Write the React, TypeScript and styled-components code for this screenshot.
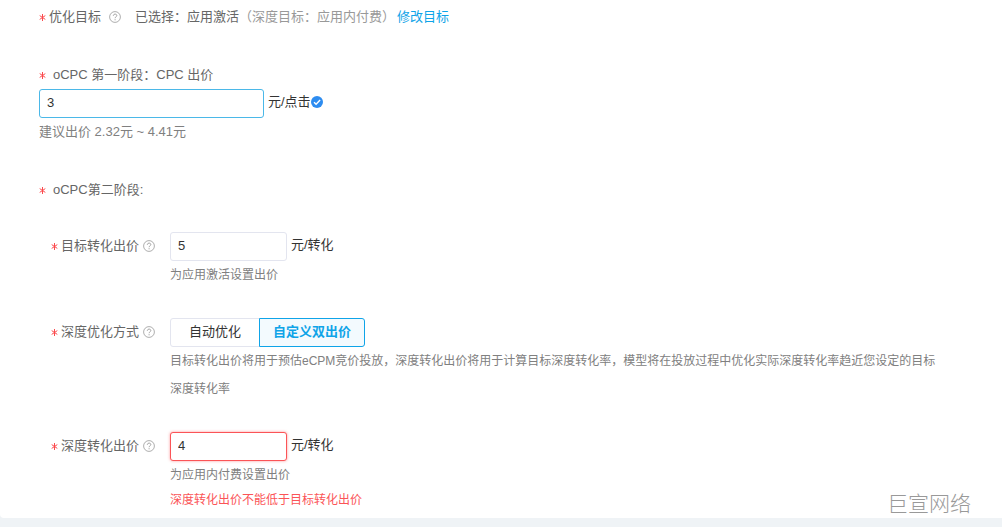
import React, { useState } from "react";
import styled, { createGlobalStyle } from "styled-components";

const GlobalStyle = createGlobalStyle`
  * { box-sizing: border-box; }
  body {
    margin: 0;
    background: #eff3f6;
    color: #666;
    font-family: "Liberation Sans", "Noto Sans CJK SC", sans-serif;
    font-size: 13px;
    line-height: 28px;
  }
  input, button { font: inherit; }
`;

const Panel = styled.main`
  position: relative;
  padding: 3px 60px 7px 39px;
  background: #fff;
  border-radius: 0 0 0 4px;
`;

const GoalRow = styled.div`
  display: flex;
  align-items: center;
  white-space: nowrap;
`;

const Chosen = styled.span`
  margin-left: 14px;
`;

const Muted = styled.span`
  color: #999;
`;

const GoalLink = styled.a`
  margin-left: 2px;
  color: #0fa4e8;
  text-decoration: none;
`;

const Stage = styled.section`
  margin-top: 30px;
`;

const StageTitle = styled.label`
  display: flex;
  align-items: center;
  gap: 4px;
`;

const Fields = styled.div`
  display: grid;
  row-gap: 29px;
  margin-top: 28px;
  padding-left: 12px;
`;

const Field = styled.div`
  display: grid;
  grid-template-columns: 119px 1fr;
  align-items: start;
`;

const FieldLabel = styled.div`
  display: flex;
  align-items: center;
`;

const Star = styled.span`
  flex: none;
  width: 10px;
  height: 28px;
  display: inline-flex;
  align-items: center;
`;

const HelpButton = styled.button<{ $gap: number }>`
  display: inline-flex;
  margin-left: ${(p) => p.$gap}px;
  padding: 0;
  border: 0;
  background: none;
  color: #999;
  cursor: pointer;
`;

const Control = styled.div`
  display: flex;
  align-items: flex-start;
  gap: 4px;
  color: #333;
`;

const TextInput = styled.input<{ $wide?: boolean; $tone?: "active" | "error" }>`
  width: ${(p) => (p.$wide ? 225 : 117)}px;
  height: 29px;
  padding: 0 7px 2px;
  border: 1px solid
    ${(p) => (p.$tone === "active" ? "#4bb8e8" : p.$tone === "error" ? "#fb5457" : "#e3e5ef")};
  border-radius: 3px;
  background: #fff;
  box-shadow: ${(p) => (p.$tone === "error" ? "0 0 3px rgba(251, 84, 87, 0.6)" : "none")};
  color: #333;
  outline: none;
`;

const Unit = styled.span`
  display: inline-flex;
  align-items: center;
  line-height: 26px;
`;

const Hint = styled.p<{ $large?: boolean }>`
  margin: 0;
  color: #808080;
  font-size: ${(p) => (p.$large ? 13 : 12)}px;
`;

const ErrorText = styled.p`
  margin: 0;
  color: #fb5457;
  font-size: 12px;
  line-height: 22px;
`;

const Segments = styled.div`
  display: flex;
`;

const Segment = styled.button<{ $on: boolean }>`
  height: 29px;
  padding: 0 ${(p) => (p.$on ? 13 : 18)}px 2px;
  border: 1px solid ${(p) => (p.$on ? "#0fa4e8" : "#e3e5ef")};
  background: ${(p) => (p.$on ? "#f3fafe" : "#fff")};
  color: ${(p) => (p.$on ? "#0fa4e8" : "#333")};
  font-weight: ${(p) => (p.$on ? 700 : 400)};
  line-height: 24px;
  z-index: ${(p) => (p.$on ? 1 : 0)};
  cursor: pointer;
  &:first-child { border-radius: 3px 0 0 3px; }
  &:last-child { margin-left: -1px; border-radius: 0 3px 3px 0; }
`;

const Watermark = styled.div`
  position: absolute;
  right: 31px;
  bottom: 0;
  color: #999;
  font-size: 21px;
  font-weight: 300;
`;

const Required = () => (
  <Star aria-hidden="true">
    <svg width="7" height="7" viewBox="0 0 7 7" fill="none" stroke="#fb4a4d">
      <path d="M3.5 0v7M.7 1.6l5.6 3.8M6.3 1.6L.7 5.4" />
    </svg>
  </Star>
);

const Help = ({ gap, label }: { gap: number; label: string }) => (
  <HelpButton type="button" $gap={gap} aria-label={label}>
    <svg width="12" height="12" viewBox="0 0 12 12" fill="none" stroke="currentColor">
      <circle cx="6" cy="6" r="5.4" strokeWidth=".8" />
      <path d="M4.3 4.8c0-2.3 3.5-2.2 3.5-.2 0 1.2-1.7 1.2-1.7 2.6M6.1 8.2v1.1" strokeWidth=".9" />
    </svg>
  </HelpButton>
);

const Check = () => (
  <svg width="12" height="12" viewBox="0 0 12 12" fill="none" aria-hidden="true">
    <circle cx="6" cy="6" r="6" fill="#2d8cf0" />
    <path d="M3 6.2l2.1 2.1 4-4.2" stroke="#fff" strokeWidth="1.4" />
  </svg>
);

export default function App() {
  const [clickBid, setClickBid] = useState("3");
  const [targetBid, setTargetBid] = useState("5");
  const [deepBid, setDeepBid] = useState("4");
  const [mode, setMode] = useState("custom");

  return (
    <>
      <GlobalStyle />
      <Panel>
        <GoalRow>
          <Required />
          <span>优化目标</span>
          <Help gap={8} label="优化目标说明" />
          <Chosen>
            已选择：应用激活<Muted>（深度目标：应用内付费）</Muted>
          </Chosen>
          <GoalLink href="#goal">修改目标</GoalLink>
        </GoalRow>

        <Stage>
          <StageTitle htmlFor="click-bid">
            <Required />
            oCPC 第一阶段：CPC 出价
          </StageTitle>
          <Control>
            <TextInput
              id="click-bid"
              $wide
              $tone="active"
              value={clickBid}
              onChange={(e) => setClickBid(e.target.value)}
            />
            <Unit>
              元/点击
              <Check />
            </Unit>
          </Control>
          <Hint $large>建议出价 2.32元 ~ 4.41元</Hint>
        </Stage>

        <Stage>
          <StageTitle as="div">
            <Required />
            oCPC第二阶段:
          </StageTitle>
          <Fields>
            <Field>
              <FieldLabel>
                <Required />
                <label htmlFor="target-bid">目标转化出价</label>
                <Help gap={4} label="目标转化出价说明" />
              </FieldLabel>
              <div>
                <Control>
                  <TextInput
                    id="target-bid"
                    value={targetBid}
                    onChange={(e) => setTargetBid(e.target.value)}
                  />
                  <Unit>元/转化</Unit>
                </Control>
                <Hint>为应用激活设置出价</Hint>
              </div>
            </Field>

            <Field>
              <FieldLabel>
                <Required />
                <span id="mode-label">深度优化方式</span>
                <Help gap={4} label="深度优化方式说明" />
              </FieldLabel>
              <div>
                <Segments role="group" aria-labelledby="mode-label">
                  <Segment type="button" $on={mode === "auto"} onClick={() => setMode("auto")}>
                    自动优化
                  </Segment>
                  <Segment type="button" $on={mode === "custom"} onClick={() => setMode("custom")}>
                    自定义双出价
                  </Segment>
                </Segments>
                <Hint>
                  目标转化出价将用于预估eCPM竞价投放，深度转化出价将用于计算目标深度转化率，模型将在投放过程中优化实际深度转化率趋近您设定的目标深度转化率
                </Hint>
              </div>
            </Field>

            <Field>
              <FieldLabel>
                <Required />
                <label htmlFor="deep-bid">深度转化出价</label>
                <Help gap={4} label="深度转化出价说明" />
              </FieldLabel>
              <div>
                <Control>
                  <TextInput
                    id="deep-bid"
                    $tone="error"
                    aria-invalid="true"
                    aria-describedby="deep-bid-error"
                    value={deepBid}
                    onChange={(e) => setDeepBid(e.target.value)}
                  />
                  <Unit>元/转化</Unit>
                </Control>
                <Hint>为应用内付费设置出价</Hint>
                <ErrorText id="deep-bid-error">深度转化出价不能低于目标转化出价</ErrorText>
              </div>
            </Field>
          </Fields>
        </Stage>
        <Watermark>巨宣网络</Watermark>
      </Panel>
    </>
  );
}
